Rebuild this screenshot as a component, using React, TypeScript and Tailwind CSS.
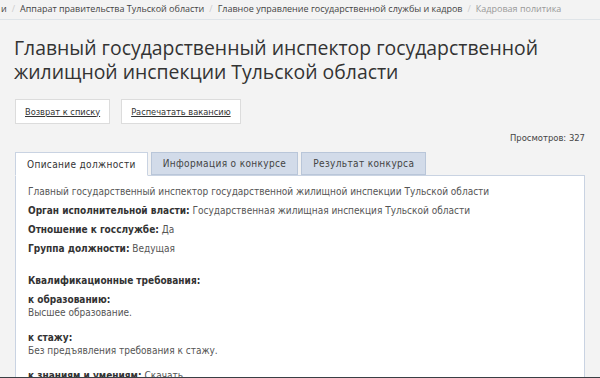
import React, { useState } from 'react';

const crumbs = [
  'Аппарат правительства Тульской области',
  'Главное управление государственной службы и кадров',
];

const tabs = ['Описание должности', 'Информация о конкурсе', 'Результат конкурса'];

const App = () => {
  const [activeTab, setActiveTab] = useState(0);

  return (
    <div className="min-h-[378px] bg-[#f3f3f3] text-[#333] overflow-hidden" style={{ fontFamily: '"Open Sans", sans-serif' }}>
      {/* Breadcrumbs */}
      <div className="h-[20px] border-b border-[#dfe4e8] flex items-center text-[9px] whitespace-nowrap pl-[1px] pb-[2px]">
        <span className="text-[#444]">и</span>
        {crumbs.map((c) => (
          <React.Fragment key={c}>
            <span className="text-[#ccc] mx-[5px]">/</span>
            <a className="text-[#444]">{c}</a>
          </React.Fragment>
        ))}
        <span className="text-[#ccc] mx-[5px]">/</span>
        <span className="text-[#999]">Кадровая политика</span>
      </div>

      <div className="px-[15px]">
        <h1 className="mt-[16px] text-[19.4px] leading-[24px] text-[#333] -ml-[1px]">
          Главный государственный инспектор государственной жилищной инспекции Тульской области
        </h1>

        <div className="mt-[15px] flex gap-[11px] text-[9.2px]" style={{ fontFamily: '"DejaVu Sans Condensed", "DejaVu Sans", sans-serif' }}>
          <button className="h-[25px] px-[9px] bg-white border border-[#dcdcdc] underline text-[#333]">Возврат к списку</button>
          <button className="h-[25px] px-[9px] bg-white border border-[#dcdcdc] underline text-[#333]">Распечатать вакансию</button>
        </div>

        <div className="mt-[7px] text-right text-[9.4px] text-[#444]" style={{ fontFamily: '"DejaVu Sans Condensed", "DejaVu Sans", sans-serif' }}>
          Просмотров: 327
        </div>

        <div style={{ fontFamily: '"DejaVu Sans Condensed", "DejaVu Sans", sans-serif' }}>
          {/* Tabs */}
          <div className="mt-[7px] flex gap-[3px] items-end">
            {tabs.map((t, i) => (
              <button
                key={t}
                onClick={() => setActiveTab(i)}
                className={
                  i === activeTab
                    ? 'h-[24px] px-[11px] text-[10px] tracking-[0.35px] bg-white border border-[#c9d3e2] border-b-white relative z-10 -mb-[1px] text-[#333]'
                    : 'h-[23px] px-[11px] text-[10px] tracking-[0.35px] bg-[#d2dbe9] border border-[#b9c6d9] text-[#444]'
                }
              >
                {t}
              </button>
            ))}
          </div>

          {/* Panel */}
          <div className="bg-white border border-[#c9d3e2] px-[12px] pt-[9px] pb-[20px] text-[10px] leading-[13px] text-[#555] h-[210px]">
            <p>Главный государственный инспектор государственной жилищной инспекции Тульской области</p>
            <p className="mt-[6px]"><b className="text-[#333]">Орган исполнительной власти:</b> Государственная жилищная инспекция Тульской области</p>
            <p className="mt-[6px]"><b className="text-[#333]">Отношение к госслужбе:</b> Да</p>
            <p className="mt-[6px]"><b className="text-[#333]">Группа должности:</b> Ведущая</p>

            <p className="mt-[19px]"><b className="text-[#333]">Квалификационные требования:</b></p>
            <p className="mt-[6px]"><b className="text-[#333]">к образованию:</b></p>
            <p>Высшее образование.</p>
            <p className="mt-[12px]"><b className="text-[#333]">к стажу:</b></p>
            <p>Без предъявления требования к стажу.</p>
            <p className="mt-[12px]"><b className="text-[#333]">к знаниям и умениям:</b> <a className="text-[#555]">Скачать</a></p>
          </div>
        </div>
      </div>

      <div className="fixed left-0 right-0 bottom-0 h-[1px] bg-[#3a3f44]" />
    </div>
  );
};

export default App;
